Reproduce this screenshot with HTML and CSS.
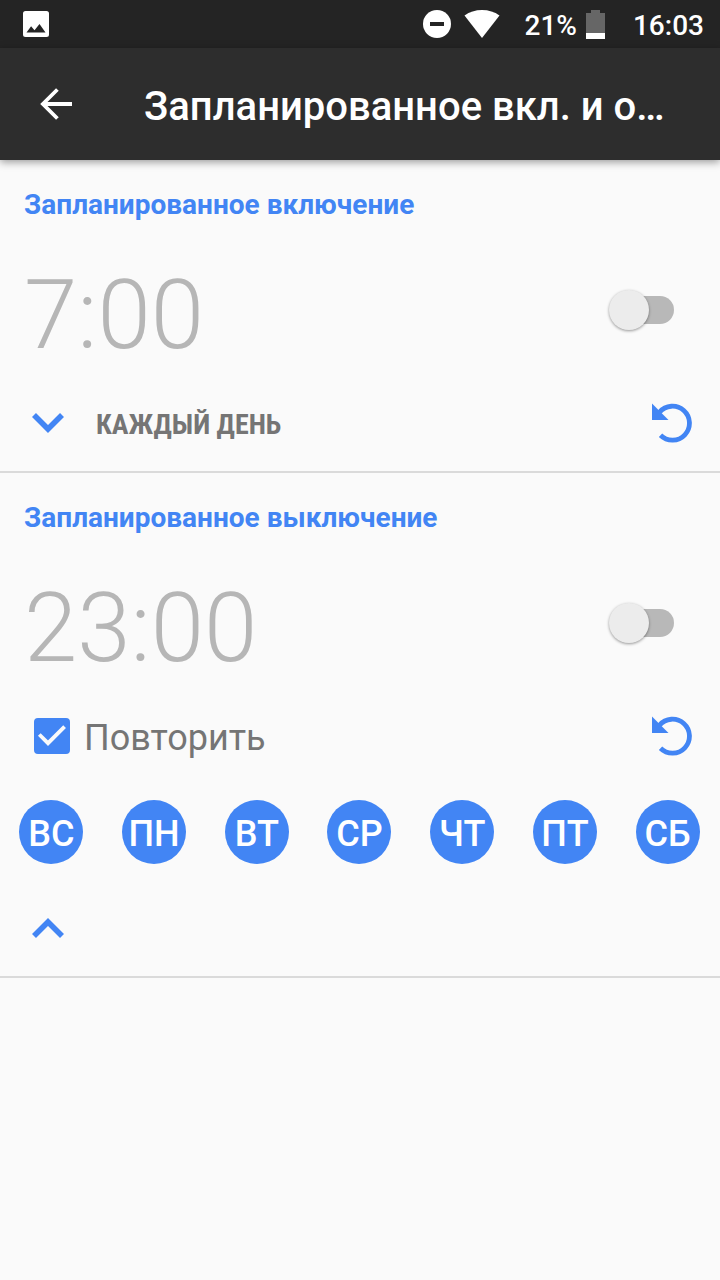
FILE: index.html
```html
<!DOCTYPE html>
<html lang="ru">
<head>
<meta charset="utf-8">
<meta name="viewport" content="width=device-width, initial-scale=1">
<title>Запланированное вкл. и о…</title>
<link rel="stylesheet" href="styles.css">
</head>
<body>
<div class="status-bar">
  <svg class="status-photo" width="26" height="26" viewBox="0 0 26 26" aria-hidden="true"><path fill="#fff" fill-rule="evenodd" d="M2.500 0h21A2.500 2.500 0 0 1 26 2.500v21a2.500 2.500 0 0 1-2.500 2.500h-21A2.500 2.500 0 0 1 0 23.500v-21A2.500 2.500 0 0 1 2.500 0zM3.500 21.500h19l-6-8.500-5 6.200-3.400-4z"/></svg>
  <svg class="status-dnd" width="28" height="28" viewBox="0 0 28 28" aria-hidden="true"><circle cx="14" cy="14" r="14" fill="#fff"/><path fill="#242424" d="M7 12h14v4H7z"/></svg>
  <svg class="status-wifi" width="36" height="28" viewBox="0 0 36 28" aria-hidden="true"><path fill="#fff" d="M18 28 .5 5.500Q8 0 18 0t17.500 5.500z"/></svg>
  <span class="status-text">21%</span>
  <svg class="status-battery" width="19" height="29" viewBox="0 0 19 29" aria-hidden="true"><path fill="#666" d="M5 0h9v3h5v20H0V3h5z"/><path fill="#fff" d="M0 23h19v6H0z"/></svg>
  <span class="status-text status-clock">16:03</span>
</div>
<header class="app-bar">
  <button class="icon-button" type="button" aria-label="Назад">
    <svg width="32" height="32" viewBox="0 0 32 32"><path fill="none" stroke="#fff" stroke-width="3.800" d="M32 16H3M17.400 1.500 2.900 16l14.500 14.500"/></svg>
  </button>
  <h1 class="app-title">Запланированное вкл. и о…</h1>
</header>
<main>
  <section class="schedule">
    <h2 class="schedule-title" id="on-title">Запланированное включение</h2>
    <div class="time-row">
      <button class="time" type="button">7:00</button>
      <input class="switch" type="checkbox" role="switch" aria-labelledby="on-title">
    </div>
    <div class="option-row">
      <button class="expand" type="button">
        <svg class="chevron" width="32" height="20" viewBox="0 0 32 20" aria-hidden="true"><path fill="none" stroke="#4285f4" stroke-width="5.600" d="m2 2 14 14L30 2"/></svg>
        <span class="summary">КАЖДЫЙ ДЕНЬ</span>
      </button>
      <button class="reset" type="button" aria-label="Сбросить">
        <svg width="40" height="40" viewBox="0 0 40 40"><path fill="none" stroke="#4285f4" stroke-width="4.800" d="M7.500 9.200A17 17 0 1 1 8.500 32.300"/><path fill="#4285f4" d="M0 .5 16.500 17H0z"/></svg>
      </button>
    </div>
  </section>
  <section class="schedule">
    <h2 class="schedule-title" id="off-title">Запланированное выключение</h2>
    <div class="time-row">
      <button class="time" type="button">23:00</button>
      <input class="switch" type="checkbox" role="switch" aria-labelledby="off-title">
    </div>
    <div class="option-row">
      <label class="repeat">
        <span class="check">
          <input class="check-input" type="checkbox" checked>
          <svg class="check-mark" width="36" height="36" viewBox="0 0 36 36" aria-hidden="true"><path fill="none" stroke="#fafafa" stroke-width="3.800" d="m5.300 16.500 8.700 8.700L30.600 8.600"/></svg>
        </span>
        <span class="repeat-text">Повторить</span>
      </label>
      <button class="reset" type="button" aria-label="Сбросить">
        <svg width="40" height="40" viewBox="0 0 40 40"><path fill="none" stroke="#4285f4" stroke-width="4.800" d="M7.500 9.200A17 17 0 1 1 8.500 32.300"/><path fill="#4285f4" d="M0 .5 16.500 17H0z"/></svg>
      </button>
    </div>
    <div class="days">
      <button class="day" type="button" aria-pressed="true">ВС</button>
      <button class="day" type="button" aria-pressed="true">ПН</button>
      <button class="day" type="button" aria-pressed="true">ВТ</button>
      <button class="day" type="button" aria-pressed="true">СР</button>
      <button class="day" type="button" aria-pressed="true">ЧТ</button>
      <button class="day" type="button" aria-pressed="true">ПТ</button>
      <button class="day" type="button" aria-pressed="true">СБ</button>
    </div>
    <button class="expand" type="button" aria-label="Свернуть">
      <svg class="chevron" width="32" height="20" viewBox="0 0 32 20" aria-hidden="true"><path fill="none" stroke="#4285f4" stroke-width="5.600" d="M2 18 16 4l14 14"/></svg>
    </button>
  </section>
</main>
</body>
</html>
```
FILE: styles.css
```css
* {
  box-sizing: border-box;
}

body {
  margin: 0;
  min-height: 100vh;
  background: #fafafa;
  color: #757575;
  font-family: Roboto, "Noto Sans", sans-serif;
}

button {
  margin: 0;
  padding: 0;
  border: 0;
  background: none;
  color: inherit;
  font: inherit;
  cursor: pointer;
}

svg {
  display: block;
  flex: none;
}

.status-bar {
  display: flex;
  align-items: center;
  height: 48px;
  padding: 0 16px 0 23px;
  background: #242424;
  color: #fff;
}

.status-photo {
  margin-right: auto;
}

.status-wifi {
  margin: 0 25px 0 13px;
}

.status-text {
  padding-top: 4px;
  font-size: 28px;
  font-weight: 500;
  line-height: 32px;
}

.status-battery {
  margin: 0 28px 0 9px;
}

.app-bar {
  position: relative;
  display: flex;
  align-items: center;
  height: 112px;
  padding: 0 24px 0 28px;
  background: #2d2d2d;
  color: #fff;
  box-shadow: 0 2px 8px rgba(0, 0, 0, 0.4);
}

.icon-button {
  display: grid;
  place-items: center;
  flex: none;
  width: 56px;
  height: 56px;
}

.app-title {
  flex: 1;
  min-width: 0;
  margin: 0 0 0 60px;
  padding-top: 6px;
  font-size: 40px;
  font-weight: 500;
  line-height: 48px;
}

.schedule {
  padding: 29px 0 24px;
  border-bottom: 2px solid #dadada;
}

.schedule-title {
  margin: 0 24px;
  color: #4285f4;
  font-size: 28px;
  font-weight: 700;
  line-height: 32px;
}

.time-row {
  display: flex;
  align-items: center;
  justify-content: space-between;
  margin-top: 44px;
  padding: 0 46px 0 24px;
}

.time {
  color: #b6b6b6;
  font-size: 96px;
  font-weight: 300;
  line-height: 100px;
}

.switch {
  appearance: none;
  display: grid;
  align-items: center;
  width: 65px;
  height: 40px;
  margin: 0 0 10px;
}

.switch::before,
.switch::after {
  grid-area: 1 / 1;
  content: "";
}

.switch::before {
  height: 28px;
  margin-left: 12px;
  border-radius: 14px;
  background: #b8b8b8;
}

.switch::after {
  width: 40px;
  height: 40px;
  border-radius: 50%;
  background: #ececec;
  box-shadow: 0 1px 3px rgba(0, 0, 0, 0.4);
}

.option-row {
  display: flex;
  align-items: center;
  justify-content: space-between;
  height: 48px;
  margin-top: 34px;
  padding-right: 24px;
}

.expand {
  display: flex;
  align-items: center;
  gap: 32px;
  height: 48px;
  padding-left: 32px;
}

.summary {
  padding-top: 4px;
  font-family: "Roboto Condensed", "Liberation Sans Narrow", Roboto, sans-serif;
  font-size: 28px;
  font-weight: 700;
  line-height: 32px;
}

.reset {
  display: grid;
  place-items: center;
  width: 48px;
  height: 48px;
}

.repeat {
  display: flex;
  align-items: center;
  gap: 14px;
  padding-left: 34px;
}

.check {
  display: grid;
}

.check-input {
  appearance: none;
  grid-area: 1 / 1;
  width: 36px;
  height: 36px;
  margin: 0;
  border: 4px solid #757575;
  border-radius: 4px;
}

.check-input:checked {
  border-color: #4285f4;
  background: #4285f4;
}

.check-mark {
  grid-area: 1 / 1;
  visibility: hidden;
  pointer-events: none;
}

.check-input:checked + .check-mark {
  visibility: visible;
}

.repeat-text {
  padding-top: 4px;
  font-size: 36px;
  line-height: 44px;
}

.days {
  display: grid;
  grid-template-columns: repeat(7, 1fr);
  justify-items: center;
  margin: 40px 0;
  padding-right: 1px;
}

.day {
  width: 64px;
  height: 64px;
  padding-top: 4px;
  border-radius: 50%;
  background: #4285f4;
  color: #fff;
  font-size: 36px;
  font-weight: 500;
  line-height: 44px;
}
```
